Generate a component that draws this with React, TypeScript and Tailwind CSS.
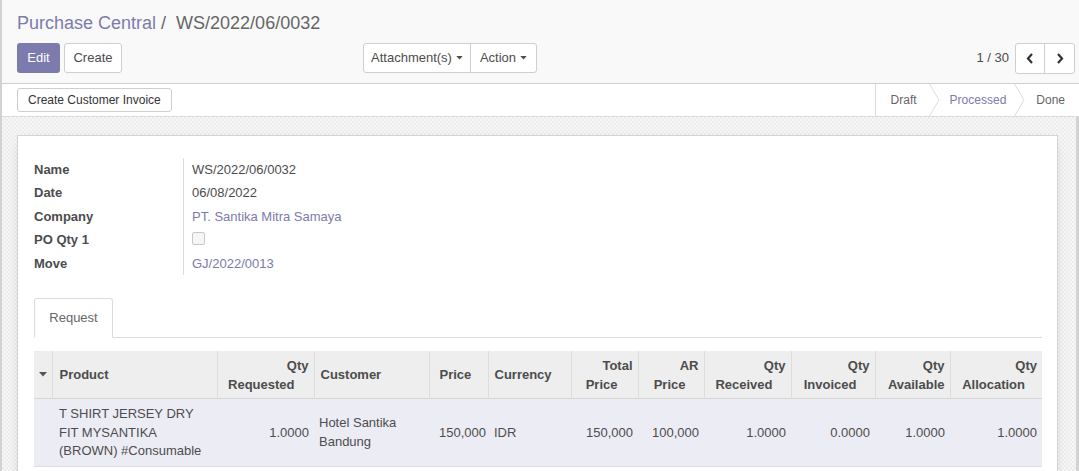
import React from 'react';

type Col = {
  w: number;
  l1?: string;
  l2: string;
  right?: boolean;
  pad2?: number;
  value: React.ReactNode;
  valueClass?: string;
};

const cols: Col[] = [
  { w: 165, l2: 'Product', value: <>T SHIRT JERSEY DRY<br />FIT MYSANTIKA<br />(BROWN) #Consumable</>, valueClass: 'pl-[7px] pr-[4px]' },
  { w: 97, l1: 'Qty', l2: 'Requested', right: true, pad2: 14, value: '1.0000' },
  { w: 115, l2: 'Customer', value: <>Hotel Santika<br />Bandung</>, valueClass: 'pl-[5px]' },
  { w: 59, l2: 'Price', value: '150,000', valueClass: 'pl-[10px]' },
  { w: 83, l2: 'Currency', value: 'IDR', valueClass: 'pl-[6px]' },
  { w: 67, l1: 'Total', l2: 'Price', right: true, pad2: 15, value: '150,000' },
  { w: 66, l1: 'AR', l2: 'Price', right: true, pad2: 13, value: '100,000' },
  { w: 87, l1: 'Qty', l2: 'Received', right: true, pad2: 13, value: '1.0000' },
  { w: 84, l1: 'Qty', l2: 'Invoiced', right: true, pad2: 13, value: '0.0000' },
  { w: 75, l1: 'Qty', l2: 'Available', right: true, pad2: 0, value: '1.0000' },
  { w: 92, l1: 'Qty', l2: 'Allocation', right: true, pad2: 12, value: '1.0000' },
];

const fields: { label: string; value: React.ReactNode }[] = [
  { label: 'Name', value: 'WS/2022/06/0032' },
  { label: 'Date', value: '06/08/2022' },
  { label: 'Company', value: <span className="text-[#7c7bad]">PT. Santika Mitra Samaya</span> },
  {
    label: 'PO Qty 1',
    value: <span className="mt-[3px] inline-block h-[13px] w-[13px] rounded-[2px] border border-[#c8c8c8] bg-[#f6f6f6]" />,
  },
  { label: 'Move', value: <span className="text-[#7c7bad]">GJ/2022/0013</span> },
];

function Caret() {
  return (
    <svg width="7" height="4" viewBox="0 0 8 5" className="ml-[4px] inline-block">
      <path d="M0 0h8L4 4.5z" fill="#4c4c4c" />
    </svg>
  );
}

function Chevron() {
  return (
    <svg width="11" height="32" viewBox="0 0 11 32" className="shrink-0">
      <path d="M0.5 0L10 16L0.5 32" fill="none" stroke="#dcdcdc" strokeWidth="1" />
    </svg>
  );
}

export default function App() {
  return (
    <div className="flex h-[471px] w-[1079px] flex-col overflow-hidden border-l-2 border-[#d2d2d2] bg-white font-['Liberation_Sans',Arial,sans-serif] text-[13px] text-[#4c4c4c]">
      {/* control panel */}
      <div className="h-[84px] shrink-0 border-b border-[#cfcfcf] bg-[#f9f9f9] pl-[15px] pr-[4px]">
        <div className="pt-[12px] text-[18px] leading-[22px]">
          <span className="text-[#7c7bad]">Purchase Central</span>
          <span className="text-[#666]"> /&nbsp; WS/2022/06/0032</span>
        </div>
        <div className="mt-[9px] flex h-[30px] items-center">
          <div className="flex w-[346px] gap-[4px]">
            <button className="h-[30px] w-[43px] rounded-[3px] bg-[#7c7bad] text-white">Edit</button>
            <button className="h-[30px] w-[58px] rounded-[3px] border border-[#cfcfcf] bg-white text-[#4c4c4c]">Create</button>
          </div>
          <div className="flex h-[30px] rounded-[3px] border border-[#cfcfcf] bg-white">
            <button className="flex w-[107px] items-center justify-center border-r border-[#cfcfcf]">
              Attachment(s)
              <Caret />
            </button>
            <button className="flex w-[65px] items-center justify-center">
              Action
              <Caret />
            </button>
          </div>
          <div className="ml-auto flex items-center">
            <span className="mr-[6px] text-[#4c4c4c]">1 / 30</span>
            <div className="flex h-[31px] rounded-[3px] border border-[#cfcfcf] bg-white">
              <button className="flex w-[29px] items-center justify-center border-r border-[#cfcfcf]">
                <svg width="8" height="11" viewBox="0 0 8 11">
                  <path d="M6 1L2 5.5L6 10" fill="none" stroke="#333" strokeWidth="2.2" />
                </svg>
              </button>
              <button className="flex w-[29px] items-center justify-center">
                <svg width="8" height="11" viewBox="0 0 8 11">
                  <path d="M2 1L6 5.5L2 10" fill="none" stroke="#333" strokeWidth="2.2" />
                </svg>
              </button>
            </div>
          </div>
        </div>
      </div>

      {/* status bar */}
      <div className="flex h-[33px] shrink-0 items-center justify-between border-b border-[#dcdcdc] bg-white pl-[15px] pr-[4px]">
        <button className="h-[24px] rounded-[3px] border border-[#cfcfcf] bg-white px-[10px] text-[12px] text-[#333]">
          Create Customer Invoice
        </button>
        <div className="flex h-[32px] items-center self-start border-l border-[#dcdcdc] text-[12px]">
          <span className="pl-[15px] pr-[12px] text-[#666]">Draft</span>
          <Chevron />
          <span className="pl-[10px] pr-[8px] text-[#7c7bad]">Processed</span>
          <Chevron />
          <span className="pl-[11px] pr-[10px] text-[#666]">Done</span>
        </div>
      </div>

      {/* sheet area */}
      <div className="flex-1 border-r-[3px] border-[#d2d2d2] bg-[repeating-conic-gradient(#ececec_0_25%,#f7f7f7_0_50%)] bg-[length:4px_4px] pl-[15px] pr-[18px] pt-[18px]">
        <div className="h-[400px] border border-[#d4d4d4] bg-white pl-[16px] pr-[15px] pt-[22px] shadow-[0_4px_12px_-6px_rgba(0,0,0,0.3)]">
          <div className="w-[420px]">
            {fields.map((f) => (
              <div key={f.label} className="flex h-[23.4px] items-center">
                <div className="flex h-full w-[150px] items-center border-r border-[#dcdcdc] font-bold text-[#4c4c4c]">
                  {f.label}
                </div>
                <div className="pl-[8px] text-[#4c4c4c]">{f.value}</div>
              </div>
            ))}
          </div>

          <div className="mt-[23px] flex border-b border-[#dcdcdc]">
            <div className="-mb-px flex h-[40px] w-[79px] items-center justify-center rounded-t-[3px] border border-b-white border-[#dcdcdc] bg-white text-[#666]">
              Request
            </div>
          </div>

          <table className="mt-[13px] w-[1008px] table-fixed border-collapse">
            <colgroup>
              <col className="w-[18px]" />
              {cols.map((c, i) => (
                <col key={i} style={{ width: c.w }} />
              ))}
            </colgroup>
            <thead>
              <tr className="h-[48px] border-b border-[#d6d6d6] bg-[#eeeeee] font-bold leading-[19px] text-[#4c4c4c]">
                <th className="border-r border-[#dddddd] text-center align-middle">
                  <svg width="8" height="5" viewBox="0 0 8 5" className="mx-auto">
                    <path d="M0 0h8L4 4.5z" fill="#555" />
                  </svg>
                </th>
                {cols.map((c, i) => (
                  <th
                    key={i}
                    className={`border-r border-[#dddddd] last:border-r-0 align-middle font-bold ${
                      c.right ? 'pr-[5px] text-right' : 'text-left'
                    } ${i === 0 ? 'pl-[7px]' : i === 3 ? 'pl-[10px]' : 'pl-[6px]'}`}
                  >
                    {c.l1 && <div className="mt-[1px]">{c.l1}</div>}
                    <div style={{ paddingRight: c.pad2 ?? 0 }}>{c.l2}</div>
                  </th>
                ))}
              </tr>
            </thead>
            <tbody>
              <tr className="h-[68px] border-b border-[#dcdcdc] bg-[#ececf5] leading-[18.5px] text-[#4c4c4c]">
                <td />
                {cols.map((c, i) => (
                  <td
                    key={i}
                    className={`align-middle ${c.right ? 'pr-[5px] text-right' : 'text-left'} ${c.valueClass ?? ''}`}
                  >
                    {c.value}
                  </td>
                ))}
              </tr>
            </tbody>
          </table>
        </div>
      </div>
    </div>
  );
}
